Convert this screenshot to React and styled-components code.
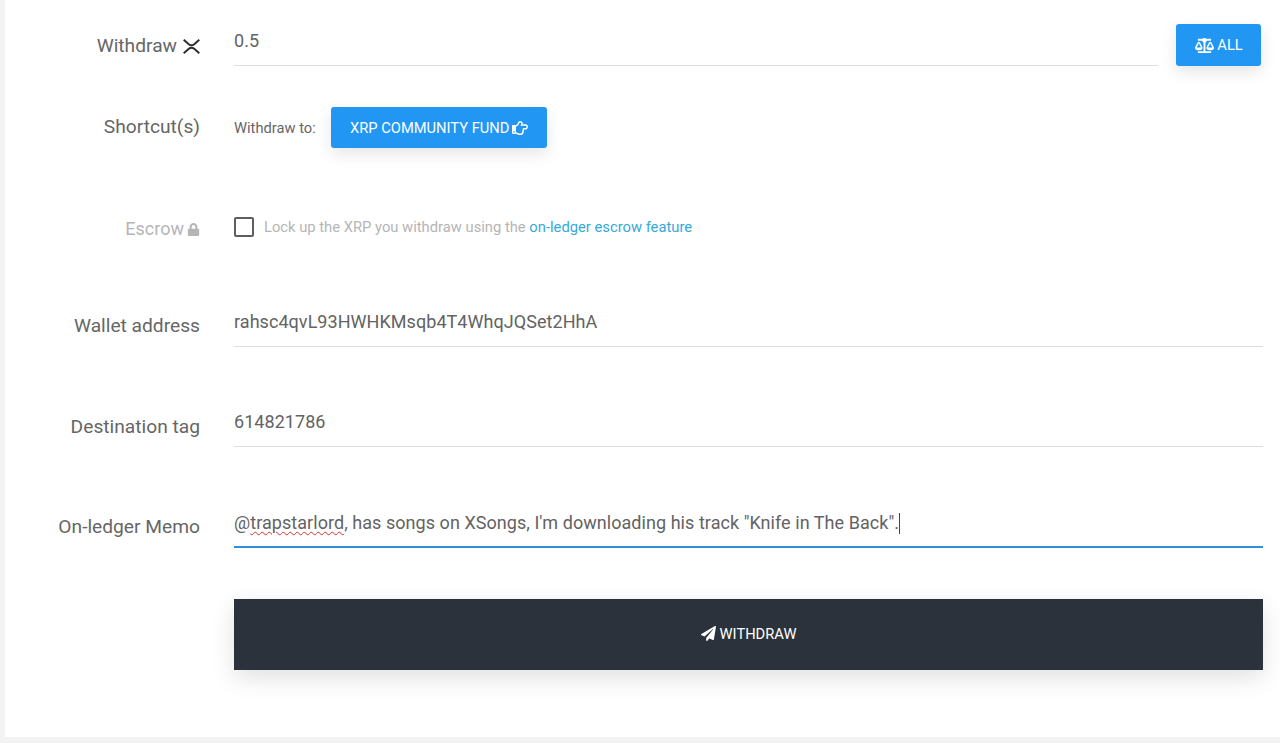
import React from "react";
import styled, { createGlobalStyle } from "styled-components";
import { FaBalanceScale, FaRegHandPointRight, FaLock, FaPaperPlane } from "react-icons/fa";

const GlobalStyle = createGlobalStyle`
  html, body { margin: 0; padding: 0; height: 100%; background: #f3f3f3; overflow: hidden; }
  body { font-family: Roboto, "Liberation Sans", sans-serif; color: #555; }
`;

const Page = styled.div`
  padding-left: 5px;
  height: 743px;
  box-sizing: border-box;
`;

const Card = styled.div`
  background: #fff;
  height: 737px;
  box-sizing: border-box;
  padding-right: 17px;
  display: flex;
  flex-direction: column;
`;

const Row = styled.div`
  display: grid;
  grid-template-columns: 195px 1fr;
  column-gap: 34px;
  height: ${(p) => p.$height}px;
  align-items: end;
`;

const Label = styled.div`
  font-size: ${(p) => (p.$muted ? 18 : 19.2)}px;
  line-height: ${(p) => (p.$muted ? 16 : 24)}px;
  text-align: right;
  color: ${(p) => (p.$muted ? "#b5b5b5" : "#666")};
  padding-bottom: ${(p) => p.$bottom}px;
  display: flex;
  justify-content: flex-end;
  align-items: center;
  gap: ${(p) => (p.$muted ? 3 : 6)}px;
  white-space: nowrap;
`;

const Field = styled.div`
  border-bottom: ${(p) => (p.$active ? "2px solid #2f8fdc" : "1px solid #dedede")};
  height: ${(p) => p.$height || 46}px;
  font-size: 18px;
  line-height: 24px;
  letter-spacing: 0.05px;
  color: #636363;
  box-sizing: border-box;
  padding-top: ${(p) => p.$top || 9}px;
  white-space: nowrap;
`;

const FieldRow = styled.div`
  display: flex;
  align-items: flex-end;
  gap: 18px;
`;

const Grow = styled.div`
  flex: 1;
`;

const BlueButton = styled.button`
  background: #2196f3;
  border: 0;
  border-radius: 3px;
  color: #fff;
  font-family: inherit;
  font-size: 14.7px;
  height: ${(p) => p.$height}px;
  width: ${(p) => p.$width}px;
  margin-right: ${(p) => p.$right || 0}px;
  padding: 0 0 0 1px;
  display: flex;
  align-items: center;
  justify-content: center;
  gap: 3px;
  box-shadow: 0 6px 16px rgba(0, 0, 0, 0.1);
  flex: none;
`;

const ShortcutBox = styled.div`
  display: flex;
  align-items: center;
  gap: 15px;
  font-size: 14.7px;
  color: #666;
`;

const EscrowBox = styled.div`
  display: flex;
  align-items: center;
  gap: 10px;
  font-size: 14.75px;
  color: #b5b5b5;
  height: 20px;
`;

const CheckBox = styled.span`
  width: 20px;
  height: 20px;
  box-sizing: border-box;
  border: 2px solid #5f5f5f;
  border-radius: 2px;
  flex: none;
`;

const TextLink = styled.a`
  color: #35a9dc;
  text-decoration: none;
`;

const Misspelled = styled.span`
  text-decoration: underline wavy #d83030 1px;
  text-underline-offset: 2px;
`;

const Caret = styled.span`
  display: inline-block;
  width: 1px;
  height: 21px;
  background: #444;
  vertical-align: -5px;
`;

const SubmitButton = styled.button`
  width: 100%;
  height: 71px;
  background: #2b323b;
  border: 0;
  color: #fff;
  font-family: inherit;
  font-size: 14.7px;
  padding: 0 0 2px;
  display: flex;
  align-items: center;
  justify-content: center;
  gap: 4px;
  box-shadow: 0 8px 24px rgba(0, 0, 0, 0.12);
`;

const XrpIcon = () => (
  <svg width="17" height="15" viewBox="0 0 17 15" fill="none" stroke="#2a2a2a" strokeWidth="1.9">
    <path d="M0.7 0.8 L5.8 5.2 C7.4 6.5 9.6 6.5 11.2 5.2 L16.3 0.8" />
    <path d="M0.7 14.2 L5.8 9.8 C7.4 8.5 9.6 8.5 11.2 9.8 L16.3 14.2" />
  </svg>
);

export default function App() {
  return (
    <Page>
      <GlobalStyle />
      <Card>
        <Row $height={66}>
          <Label $bottom={8}>Withdraw <XrpIcon /></Label>
          <FieldRow>
            <Grow><Field $height={66} $top={29}>0.5</Field></Grow>
            <BlueButton $width={85} $height={42} $right={2}><FaBalanceScale size={19} /> ALL</BlueButton>
          </FieldRow>
        </Row>
        <Row $height={82}>
          <Label $bottom={9}>Shortcut(s)</Label>
          <ShortcutBox>
            Withdraw to:
            <BlueButton $width={216} $height={41}>XRP COMMUNITY FUND <FaRegHandPointRight size={16} /></BlueButton>
          </ShortcutBox>
        </Row>
        <Row $height={89}>
          <Label $muted $bottom={0}>Escrow <FaLock size={13} /></Label>
          <EscrowBox>
            <CheckBox />
            <span>Lock up the XRP you withdraw using the <TextLink>on-ledger escrow feature</TextLink></span>
          </EscrowBox>
        </Row>
        <Row $height={110}>
          <Label $bottom={9}>Wallet address</Label>
          <Field>rahsc4qvL93HWHKMsqb4T4WhqJQSet2HhA</Field>
        </Row>
        <Row $height={100}>
          <Label $bottom={8}>Destination tag</Label>
          <Field>614821786</Field>
        </Row>
        <Row $height={101}>
          <Label $bottom={9}>On-ledger Memo</Label>
          <Field $active>@<Misspelled>trapstarlord</Misspelled>, has songs on XSongs, I'm downloading his track "Knife in The Back".<Caret /></Field>
        </Row>
        <Row $height={122}>
          <span />
          <SubmitButton><FaPaperPlane size={15} /> WITHDRAW</SubmitButton>
        </Row>
      </Card>
    </Page>
  );
}
